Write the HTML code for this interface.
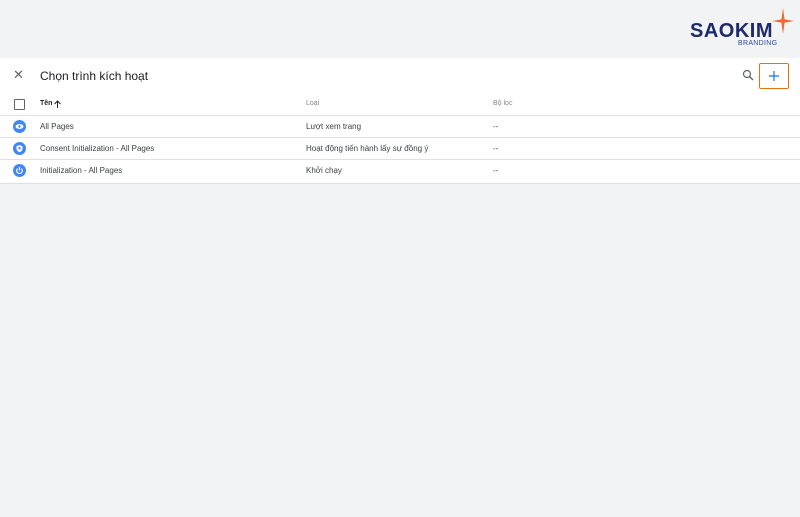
<!DOCTYPE html><html><head><meta charset="utf-8"><style>
body{margin:0;width:800px;height:517px;background:#f1f3f4;font-family:"Liberation Sans","Noto Sans CJK JP",sans-serif;position:relative;overflow:hidden;color:#202124}
.panel{position:absolute;left:0;top:58px;width:800px;height:125px;background:#fff;border-bottom:1px solid #e0e0e0}
.t{position:absolute;font-size:8px;color:#3c4043;white-space:nowrap}
.row{position:absolute;left:0;width:800px;height:22px;border-top:1px solid #e0e0e0}
.ic{position:absolute;left:13px;width:13px;height:13px}
</style></head><body>
<div style="position:absolute;left:690px;top:20px;font:bold 20px 'Liberation Sans',sans-serif;color:#1d2a6b;letter-spacing:0.5px">SAOKIM</div>
<div style="position:absolute;left:738px;top:40px;font-size:7px;color:#2f4aa0;letter-spacing:0.3px">BRANDING</div>
<svg style="position:absolute;left:772px;top:8px" width="22" height="26" viewBox="0 0 22 26"><path d="M11 0 L12.6 11.4 L22 13 L12.6 14.6 L11 26 L9.4 14.6 L0 13 L9.4 11.4Z" fill="#f06a35"/></svg>
<div class="panel">
<div style="position:absolute;left:13px;top:9px;font-size:13px;color:#5f6368">✕</div>
<div style="position:absolute;left:40px;top:11px;font-size:12px;color:#202124">Chọn trình kích hoạt</div>
<svg style="position:absolute;left:742px;top:11px" width="12" height="12" viewBox="0 0 12 12"><circle cx="5" cy="5" r="3.5" stroke="#5f6368" stroke-width="1.2" fill="none"/><path d="M7.5 7.5 L11 11" stroke="#5f6368" stroke-width="1.4"/></svg>
<div style="position:absolute;left:759px;top:5px;width:28px;height:24px;border:1px solid #e8710a;border-radius:2px"><svg style="position:absolute;left:9px;top:7px" width="10" height="10" viewBox="0 0 10 10"><path d="M5 0V10M0 5H10" stroke="#1a73e8" stroke-width="1.2"/></svg></div>
<div style="position:absolute;left:14px;top:41px;width:9px;height:9px;border:1.5px solid #5f6368;border-radius:1px"></div>
<div class="t" style="left:40px;top:42px;font-weight:bold;color:#202124;font-size:7px">Tên</div>
<svg style="position:absolute;left:54px;top:42px" width="7" height="8" viewBox="0 0 7 8"><path d="M3.5 8V1M0.5 4L3.5 1L6.5 4" stroke="#202124" stroke-width="1" fill="none"/></svg>
<div class="t" style="left:306px;top:42px;color:#80868b;font-size:7px">Loại</div>
<div class="t" style="left:493px;top:42px;color:#80868b;font-size:7px">Bộ lọc</div>
<div class="row" style="top:57px"><svg class="ic" style="top:4px" viewBox="0 0 13 13"><circle cx="6.5" cy="6.5" r="6.5" fill="#4285f4"/><ellipse cx="6.5" cy="6.5" rx="4" ry="2.4" fill="#fff"/><circle cx="6.5" cy="6.5" r="1.2" fill="#4285f4"/></svg><div class="t" style="left:40px;top:6px">All Pages</div><div class="t" style="left:306px;top:6px">Lượt xem trang</div><div class="t" style="left:493px;top:6px">--</div></div>
<div class="row" style="top:79px"><svg class="ic" style="top:4px" viewBox="0 0 13 13"><circle cx="6.5" cy="6.5" r="6.5" fill="#4285f4"/><path d="M6.5 3 L9.5 4.2 V6.5 C9.5 8.3 8.2 9.6 6.5 10.2 C4.8 9.6 3.5 8.3 3.5 6.5 V4.2Z" fill="#fff"/><circle cx="6.5" cy="6.3" r="1.2" fill="#4285f4"/></svg><div class="t" style="left:40px;top:6px">Consent Initialization - All Pages</div><div class="t" style="left:306px;top:6px">Hoạt động tiến hành lấy sự đồng ý</div><div class="t" style="left:493px;top:6px">--</div></div>
<div class="row" style="top:101px"><svg class="ic" style="top:4px" viewBox="0 0 13 13"><circle cx="6.5" cy="6.5" r="6.5" fill="#4285f4"/><path d="M4.6 4.6 A2.8 2.8 0 1 0 8.4 4.6" stroke="#fff" stroke-width="1.2" fill="none"/><path d="M6.5 3V6.5" stroke="#fff" stroke-width="1.2"/></svg><div class="t" style="left:40px;top:6px">Initialization - All Pages</div><div class="t" style="left:306px;top:6px">Khởi chạy</div><div class="t" style="left:493px;top:6px">--</div></div>
</div>
</body></html>
